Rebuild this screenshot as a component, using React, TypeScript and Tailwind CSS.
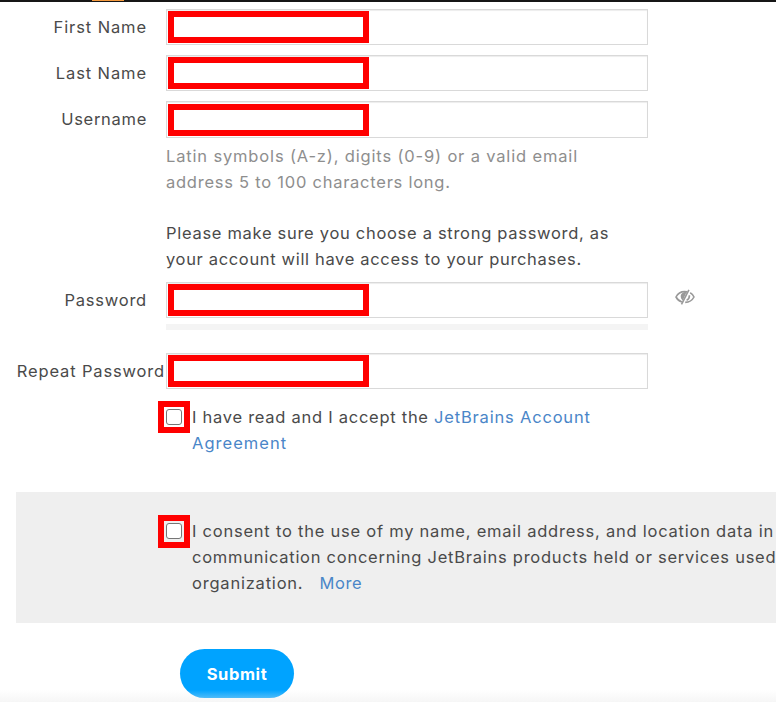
import { useState } from "react";

interface TextFieldProps {
  id: string;
  label: string;
  labelClass: string;
  height?: string;
  type?: string;
  children?: React.ReactNode;
}

// Label on the left, input on the right with a highlighted entry area
function TextField({ id, label, labelClass, height = "h-9", type = "text", children }: TextFieldProps) {
  const [value, setValue] = useState("");

  return (
    <div className={`flex items-start ${height}`}>
      <label htmlFor={id} className={`shrink-0 whitespace-nowrap text-right leading-9 ${labelClass}`}>
        {label}
      </label>
      <div className="flex h-full w-[482px] shrink-0 items-end border border-[#d9d9d9] bg-white p-px shadow-[inset_0_1px_1px_rgba(0,0,0,0.075)]">
        <input
          id={id}
          type={type}
          value={value}
          onChange={(e) => setValue(e.target.value)}
          className="h-8 w-[201px] border-6 border-[#ff0000] bg-white px-1 outline-none"
        />
      </div>
      {children}
    </div>
  );
}

function CheckField({ label, boxClass = "h-8", children }: { label: string; boxClass?: string; children: React.ReactNode }) {
  const [checked, setChecked] = useState(false);

  return (
    <div className="flex items-start">
      <div className={`flex w-8 shrink-0 justify-center border-6 border-[#ff0000] pt-0.5 ${boxClass}`}>
        <input
          type="checkbox"
          aria-label={label}
          checked={checked}
          onChange={(e) => setChecked(e.target.checked)}
          className="size-4 appearance-none rounded-[3px] border border-[#767676] bg-white checked:bg-[#0075ff]"
        />
      </div>
      <div className="ml-0.5 mt-[3px] whitespace-nowrap leading-[26px]">{children}</div>
    </div>
  );
}

function EyeClosedIcon() {
  return (
    <svg viewBox="0 0 20 16" className="h-4 w-5" fill="none" stroke="#999" strokeWidth="1.6">
      <path d="M12.2 2.9C7 1.9 3 4.2 1 8c1.400 2.500 3.300 4.200 5.900 5" />
      <path d="M15.200 3.800C17 4.800 18.200 6.200 19 8c-1.800 3.400-4.800 5.300-8.800 5.400" />
      <path d="M13.900 0.800 6.500 15.400" />
      <path d="M11.600 3C7.800 2.500 5.400 5 5.800 8c.2 1.700 1 2.700 2 3.500z" fill="#999" stroke="none" />
      <path d="M14.400 6.300c.2 2.200-.7 4-2.800 5.100" />
    </svg>
  );
}

export default function App() {
  return (
    <div className="flex h-[702px] w-[776px] flex-col overflow-hidden bg-white font-['Inter',sans-serif] text-[16.5px] font-normal text-[#4a4a4a]">
      <div className="h-0.5 shrink-0 bg-[#161616]">
        <div className="ml-[92px] h-px w-8 bg-[#f59a3e]" />
      </div>

      <form className="flex flex-col" onSubmit={(e) => e.preventDefault()}>
        <div className="mt-[7px] flex flex-col gap-2.5">
          <TextField id="first-name" label="First Name" labelClass="w-[147px] mr-[19px] tracking-[0.9px]" />
          <TextField id="last-name" label="Last Name" labelClass="w-[147px] mr-[19px] tracking-[0.9px]" />
          <TextField id="username" label="Username" labelClass="w-[147px] mr-[19px] tracking-[0.7px]" height="h-[37px]" />
        </div>

        <p className="ml-[166px] mt-[5px] whitespace-nowrap leading-[26px] text-[#8e8e8e]">
          <span className="block tracking-[0.84px]">Latin symbols (A-z), digits (0-9) or a valid email</span>
          <span className="block tracking-[0.75px]">address 5 to 100 characters long.</span>
        </p>
        <p className="ml-[166px] mt-[25px] whitespace-nowrap leading-[26px]">
          <span className="block tracking-[0.7px]">Please make sure you choose a strong password, as</span>
          <span className="block tracking-[0.66px]">your account will have access to your purchases.</span>
        </p>

        <div className="mt-2.5">
          <TextField id="password" type="password" label="Password" labelClass="w-[147px] mr-[19px] tracking-[0.78px]">
            <button type="button" aria-label="Show password" className="ml-[27px] mt-[7px]">
              <EyeClosedIcon />
            </button>
          </TextField>
        </div>
        {/* Password strength */}
        <div className="ml-[166px] mt-1.5 h-1.5 w-[482px] bg-[#f4f4f4]" />
        <div className="mt-[23px]">
          <TextField id="repeat-password" type="password" label="Repeat Password" labelClass="w-[165px] mr-px tracking-[0.84px]" />
        </div>

        <div className="ml-[158px] mt-3">
          <CheckField label="Accept the agreement">
            <div>
              <span className="tracking-[0.73px]">I have read and I accept the </span>
              <a href="#" className="tracking-[0.81px] text-[#4a86c8]">JetBrains Account</a>
            </div>
            <a href="#" className="block tracking-[1.02px] text-[#4a86c8]">Agreement</a>
          </CheckField>
        </div>

        <div className="ml-4 mt-9 h-[131px] overflow-hidden bg-[#efefef] pl-[142px] pt-[23px]">
          <CheckField label="Consent to communication" boxClass="h-[33px]">
            <span className="block tracking-[0.765px]">I consent to the use of my name, email address, and location data in</span>
            <span className="block tracking-[0.74px]">communication concerning JetBrains products held or services used</span>
            <div>
              <span className="tracking-[0.79px]">organization.</span>
              <a href="#" className="ml-4 tracking-[0.6px] text-[#4a86c8]">More</a>
            </div>
          </CheckField>
        </div>

        <button
          type="submit"
          className="ml-[180px] mt-[26px] h-[49px] w-[114px] rounded-full bg-[#00a3ff] pt-px font-bold tracking-[0.6px] text-white"
        >
          Submit
        </button>
      </form>

      {/* Footer fade over the bottom of the form */}
      <div className="relative -mt-2 h-3 shrink-0 bg-linear-to-b from-[#ededed]/0 to-[#ededed]/50" />
    </div>
  );
}
